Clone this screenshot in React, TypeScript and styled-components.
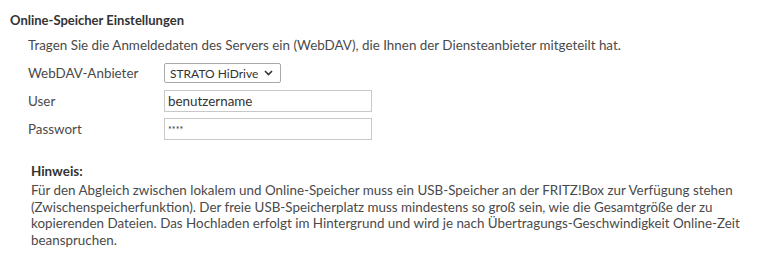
import React from 'react';
import styled, { createGlobalStyle } from 'styled-components';

const GlobalStyle = createGlobalStyle`
  html, body {
    margin: 0;
    padding: 0;
    background: #ffffff;
  }
  body {
    font-family: Lato, 'Liberation Sans', sans-serif;
    font-size: 13.4px;
    color: #4a4a4a;
  }
`;

const Page = styled.div`
  width: 758px;
  height: 260px;
  padding: 12px 10px 0 10px;
  box-sizing: border-box;
`;

const SectionTitle = styled.div`
  font-weight: 700;
  font-size: 13px;
  color: #333333;
  line-height: 17px;
`;

const Intro = styled.div`
  margin: 8px 0 0 18px;
  line-height: 17px;
`;

const FormGrid = styled.div`
  display: grid;
  grid-template-columns: 136px 208px;
  row-gap: 6px;
  margin: 8px 0 0 18px;
  align-items: center;
`;

const Label = styled.label`
  line-height: 22px;
`;

const Select = styled.div`
  display: flex;
  align-items: center;
  justify-content: space-between;
  width: 117px;
  height: 20px;
  box-sizing: border-box;
  border: 1px solid #a9a9a9;
  border-radius: 2px;
  padding: 0 7px 0 5px;
  color: #333333;
  font-size: 12px;
  white-space: nowrap;

  svg {
    flex-shrink: 0;
  }
`;

const TextInput = styled.div<{ $small?: boolean }>`
  height: 22px;
  box-sizing: border-box;
  border: 1px solid #c8c8c8;
  padding: 0 3px;
  display: flex;
  align-items: center;
  color: #333333;
  font-size: ${({ $small }) => ($small ? '9px' : '13.4px')};
`;

const Note = styled.div`
  margin: 23px 0 0 21px;
  max-width: 720px;
`;

const NoteTitle = styled.div`
  font-weight: 700;
  color: #333333;
  line-height: 17px;
`;

const NoteText = styled.p`
  margin: 2px 0 0 0;
  line-height: 16.5px;
`;

const App = () => (
  <Page>
    <GlobalStyle />
    <SectionTitle>Online-Speicher Einstellungen</SectionTitle>
    <Intro>
      Tragen Sie die Anmeldedaten des Servers ein (WebDAV), die Ihnen der Diensteanbieter mitgeteilt hat.
    </Intro>
    <FormGrid>
      <Label>WebDAV-Anbieter</Label>
      <div>
        <Select>
          <span>STRATO HiDrive</span>
          <svg width="9" height="6" viewBox="0 0 9 6">
            <path d="M1 1 L4.5 4.5 L8 1" fill="none" stroke="#333" strokeWidth="1.6" />
          </svg>
        </Select>
      </div>
      <Label>User</Label>
      <TextInput>benutzername</TextInput>
      <Label>Passwort</Label>
      <TextInput $small>****</TextInput>
    </FormGrid>
    <Note>
      <NoteTitle>Hinweis:</NoteTitle>
      <NoteText>
        Für den Abgleich zwischen lokalem und Online-Speicher muss ein USB-Speicher an der FRITZ!Box zur Verfügung stehen
        (Zwischenspeicherfunktion). Der freie USB-Speicherplatz muss mindestens so groß sein, wie die Gesamtgröße der zu
        kopierenden Dateien. Das Hochladen erfolgt im Hintergrund und wird je nach Übertragungs-Geschwindigkeit Online-Zeit
        beanspruchen.
      </NoteText>
    </Note>
  </Page>
);

export default App;
